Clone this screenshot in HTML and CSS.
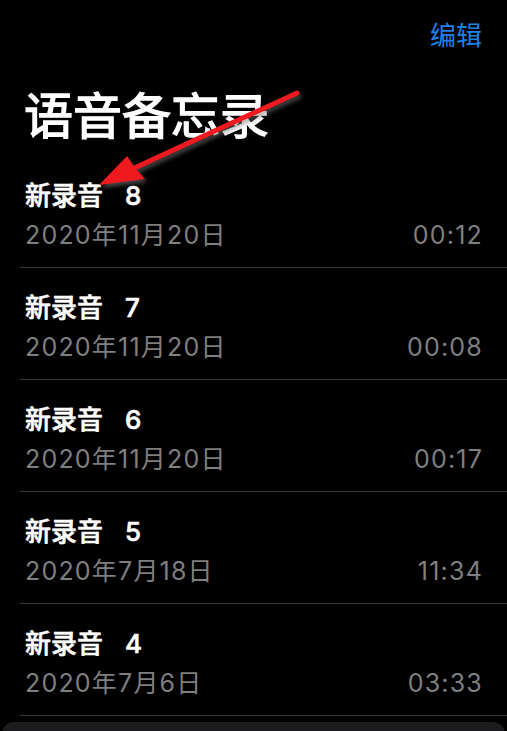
FILE: index.html
```html
<!DOCTYPE html>
<html lang="zh-CN">
<head>
<meta charset="utf-8">
<title>语音备忘录</title>
<link rel="stylesheet" href="styles.css">
</head>
<body>
<div class="screen">
  <div class="nav"><span class="edit">编辑</span></div>
  <h1 class="title">语音备忘录</h1>
  <ul class="list">
    <li class="row"><div class="name">新录音 8</div><div class="meta"><span>2020年11月20日</span><span>00:12</span></div></li>
    <li class="row"><div class="name">新录音 7</div><div class="meta"><span>2020年11月20日</span><span>00:08</span></div></li>
    <li class="row"><div class="name">新录音 6</div><div class="meta"><span>2020年11月20日</span><span>00:17</span></div></li>
    <li class="row"><div class="name">新录音 5</div><div class="meta"><span>2020年7月18日</span><span>11:34</span></div></li>
    <li class="row"><div class="name">新录音 4</div><div class="meta"><span>2020年7月6日</span><span>03:33</span></div></li>
  </ul>
  <div class="panel"></div>
  <svg class="arrow" width="507" height="731" viewBox="0 0 507 731">
    <line x1="297" y1="93" x2="128" y2="171" stroke="#ee1a1f" stroke-width="5" stroke-linecap="round"/>
    <polygon points="99,185 145,179 135,168 127,156" fill="#ee1a1f"/>
  </svg>
</div>
</body>
</html>
```
FILE: styles.css
```css
html, body {
  margin: 0;
  padding: 0;
  background: #000;
}
.screen {
  position: relative;
  width: 507px;
  height: 731px;
  overflow: hidden;
  background: #000;
  font-family: "Inter", "Noto Sans CJK SC", sans-serif;
}
.nav {
  height: 68px;
  display: flex;
  justify-content: flex-end;
  align-items: center;
  padding-right: 25px;
}
.edit {
  font-family: "Noto Sans CJK SC", sans-serif;
  font-size: 26px;
  line-height: 30px;
  color: #1f80e6;
}
.title {
  margin: 17px 0 0 0;
  padding-left: 24px;
  font-family: "Noto Sans CJK SC", sans-serif;
  font-size: 49px;
  line-height: 56px;
  height: 60px;
  font-weight: 400;
  -webkit-text-stroke: 1.4px #fff;
  color: #fff;
}
.list {
  list-style: none;
  margin: 11px 0 0 0;
  padding: 0;
}
.row {
  margin-left: 20px;
  padding: 25px 24px 17px 5px;
  border-bottom: 1px solid #38383a;
}
.name {
  font-size: 26px;
  line-height: 30px;
  height: 30px;
  font-weight: 500;
  -webkit-text-stroke: 0.6px #fff;
  word-spacing: 15px;
  color: #fff;
}
.meta {
  margin-top: 9px;
  display: flex;
  justify-content: space-between;
  font-size: 25px;
  line-height: 30px;
  height: 30px;
  letter-spacing: 1.2px;
  color: #7f7f7f;
}
.panel {
  margin: 6px 2px 0 2px;
  height: 20px;
  background: #1c1c1e;
  border-radius: 12px 12px 0 0;
}
.arrow {
  position: absolute;
  left: 0;
  top: 0;
  pointer-events: none;
  filter: drop-shadow(2px 3px 2px rgba(120,120,120,0.6));
}
```
